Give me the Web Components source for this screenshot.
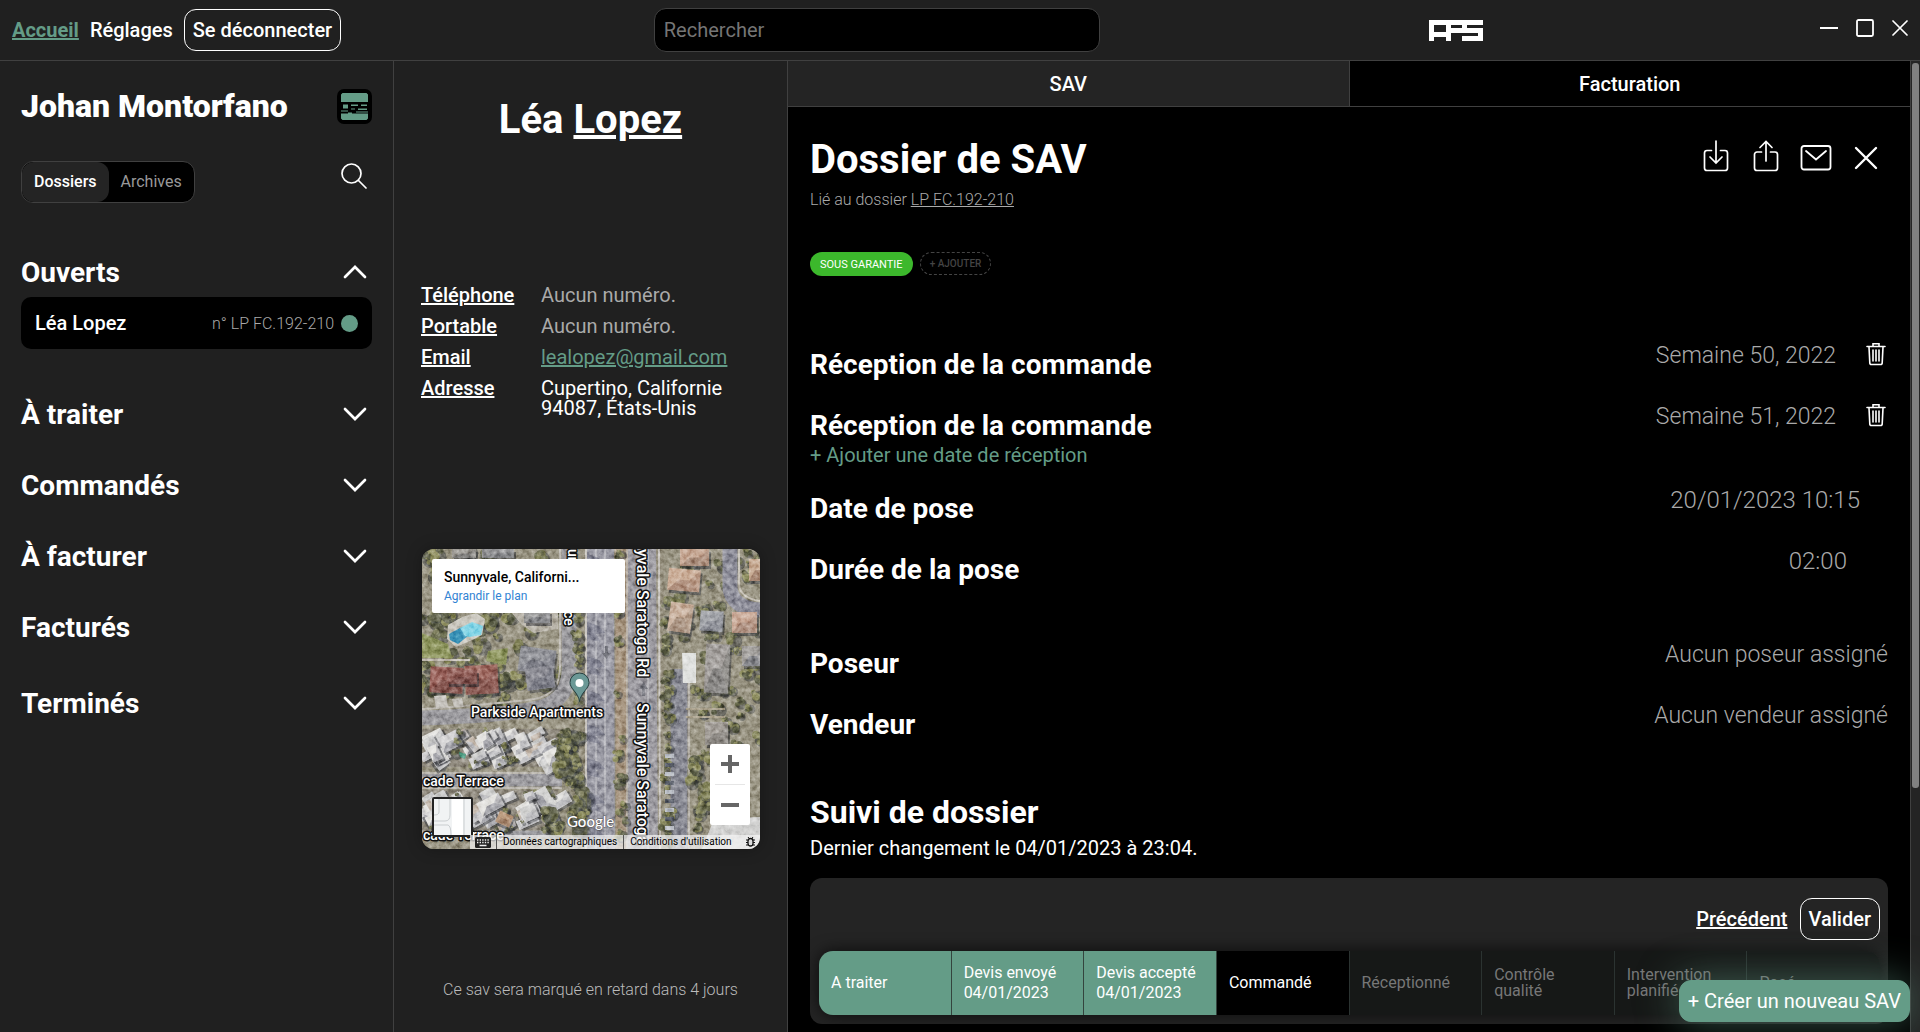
<!DOCTYPE html>
<html lang="fr">
<head>
<meta charset="utf-8">
<title>APS</title>
<style>
    :root {
        --accent: #649c87;
        --panel: #202020;
        --raised: #242424;
        --line: #404040;
        --muted: #999;
    }

    body {
        margin: 0;
        height: 100vh;
        overflow: hidden;
        background: #000;
        color: #fff;
        font: 500 20px/23px Roboto, sans-serif;
    }
</style>
</head>
<body>
<aps-app>
    <aps-topbar slot="top"></aps-topbar>
    <aps-sidebar user="Johan Montorfano">
        <aps-group open>Ouverts
            <aps-card slot="items" ref="n° LP FC.192-210">Léa Lopez</aps-card>
        </aps-group>
        <aps-group>À traiter</aps-group>
        <aps-group>Commandés</aps-group>
        <aps-group>À facturer</aps-group>
        <aps-group>Facturés</aps-group>
        <aps-group class="last">Terminés</aps-group>
    </aps-sidebar>
    <aps-client>
        <aps-map></aps-map>
    </aps-client>
    <aps-dossier></aps-dossier>
    <aps-scrollbar></aps-scrollbar>
</aps-app>

<script>
const icons = {
  search: [26, 26, `<circle cx="10.5" cy="10.5" r="9.5"/><path d="M17.5 17.5 25 25"/>`, 1.7],
  chevron: [24, 14, `<path d="M2 2 12 12 22 2"/>`, 2.7],
  minus: [18, 18, `<path d="M0 9H18"/>`, 2],
  square: [18, 18, `<rect x="1" y="1" width="16" height="16" rx="1.5"/>`, 1.8],
  cross: [16, 16, `<path d="M1 1 15 15M15 1 1 15"/>`, 1.7],
  close: [24, 24, `<path d="M2 2 22 22M22 2 2 22"/>`, 2.4],
  download: [26, 32, `<path d="M8.5 10.5H4A2.5 2.5 0 0 0 1.5 13v15A2.5 2.5 0 0 0 4 30.5h18a2.5 2.5 0 0 0 2.5-2.5V13A2.5 2.5 0 0 0 22 10.5h-4.5M13 1V23M7 17l6 6 6-6"/>`, 1.7],
  share: [26, 32, `<path d="M8.5 12H4a2.5 2.5 0 0 0-2.5 2.5V28A2.5 2.5 0 0 0 4 30.5h18a2.5 2.5 0 0 0 2.5-2.5V14.5A2.5 2.5 0 0 0 22 12h-4.5M13 21V1.5M7 7.5l6-6 6 6"/>`, 1.7],
  mail: [32, 26, `<rect x="1.5" y="1" width="29" height="23.5" rx="2.5"/><path d="M6 6 16 14.5 26 6"/>`, 1.8],
  trash: [20, 24, `<path d="M1 4.5H19M7 4V1.8H13V4M3 5l.8 16A1.5 1.5 0 0 0 5.3 22.5h9.4a1.5 1.5 0 0 0 1.5-1.5L17 5M7 8v11M10 8v11M13 8v11"/>`, 1.6],
};

class ApsIcon extends HTMLElement {
  constructor() {
    super();
    this.attachShadow({ mode: "open" });
  }

  connectedCallback() {
    const [w, h, shape, stroke] = icons[this.getAttribute("name")];
    this.shadowRoot.innerHTML = `
<style>
    :host { display: inline-flex; }
    svg { display: block; fill: none; stroke: currentColor; stroke-linecap: round; }
</style>
<svg width="${w}" height="${h}" viewBox="0 0 ${w} ${h}" stroke-width="${stroke}" aria-hidden="true">${shape}</svg>`;
  }
}
customElements.define("aps-icon", ApsIcon);

// small helper: element whose markup does not depend on anything
function define(name, html) {
  const template = document.createElement("template");
  template.innerHTML = html;
  customElements.define(name, class extends HTMLElement {
    constructor() {
      super();
      const shadow = this.attachShadow({ mode: "open" });
      shadow.append(template.content.cloneNode(true));
      for (const el of shadow.querySelectorAll("[data-attr]")) {
        el.textContent = this.getAttribute(el.dataset.attr);
      }
    }
  });
}

define("aps-button", `
<style>
    :host { display: inline-block; }
    button {
        box-sizing: border-box;
        height: 42px;
        padding: 0 8px;
        border: 1px solid #fff;
        border-radius: 12px;
        background: transparent;
        color: inherit;
        font: inherit;
        white-space: nowrap;
    }
    :host([primary]) button {
        border-color: var(--accent);
        background: var(--accent);
        box-shadow: 0 0 40px rgba(100, 156, 135, .55);
    }
</style>
<button type="button"><slot></slot></button>
`);

define("aps-topbar", `
<style>
    :host {
        display: grid;
        grid-template-columns: calc(34% + 1px) 446px 1fr auto;
        align-items: center;
        height: 60px;
        background: var(--panel);
        border-bottom: 1px solid var(--line);
    }
    nav { display: flex; align-items: center; gap: 11px; padding-left: 12px; }
    a { color: inherit; text-decoration: none; }
    a.current { color: var(--accent); font-weight: 700; text-decoration: underline; }
    input {
        box-sizing: border-box;
        width: 100%;
        height: 44px;
        padding: 0 9px;
        border: 1px solid var(--line);
        border-radius: 12px;
        background: #000;
        color: #fff;
        font: 400 20px/23px Roboto, sans-serif;
    }
    input::placeholder { color: #757575; }
    .logo { justify-self: center; fill: #fff; }
    .window { display: flex; align-items: center; gap: 18px; padding: 0 12px 4px 7px; }
    .window button { display: flex; padding: 0; border: 0; background: none; color: #fff; }
</style>
<nav>
    <a class="current" href="#accueil">Accueil</a>
    <a href="#reglages">Réglages</a>
    <aps-button>Se déconnecter</aps-button>
</nav>
<input type="search" placeholder="Rechercher" aria-label="Rechercher">
<svg class="logo" width="54" height="21" viewBox="0 0 54 21" role="img">
    <path fill-rule="evenodd" d="M0 0H54V5H38V8H54V21H33V16H49V13H22V21H17V17H5V21H0ZM5 5V12H17V5ZM22 5V8H33V5Z"/>
</svg>
<div class="window">
    <button type="button" aria-label="Réduire"><aps-icon name="minus"></aps-icon></button>
    <button type="button" aria-label="Agrandir"><aps-icon name="square"></aps-icon></button>
    <button type="button" aria-label="Fermer"><aps-icon name="cross"></aps-icon></button>
</div>
`);

define("aps-card", `
<style>
    :host {
        display: flex;
        align-items: center;
        gap: 7px;
        height: 52px;
        margin-top: 8px;
        padding: 0 14px;
        border-radius: 10px;
        background: #000;
        font: 500 20px/23px Roboto, sans-serif;
    }
    .name { flex: 1; }
    .ref { color: #aaa; font-size: 16px; font-weight: 300; }
    i { width: 17px; height: 17px; border-radius: 50%; background: var(--accent); }
</style>
<span class="name"><slot></slot></span>
<span class="ref" data-attr="ref"></span>
<i></i>
`);

define("aps-group", `
<style>
    :host { display: block; margin-bottom: 38px; }
    :host([open]) { margin-bottom: 49px; }
    button {
        display: flex;
        justify-content: space-between;
        align-items: center;
        width: 100%;
        padding: 0 5px 0 0;
        border: 0;
        background: none;
        color: inherit;
        font: 700 28px/33px Roboto, sans-serif;
    }
    aps-icon { margin-bottom: 2px; }
    :host([open]) aps-icon { transform: scaleY(-1); }
</style>
<button type="button"><span><slot></slot></span><aps-icon name="chevron"></aps-icon></button>
<slot name="items"></slot>
`);

define("aps-sidebar", `
<style>
    :host {
        display: block;
        box-sizing: border-box;
        padding: 26px 21px;
        background: var(--panel);
        border-right: 1px solid var(--line);
    }
    header, .tools { display: flex; justify-content: space-between; }
    header { align-items: center; margin-bottom: 36px; }
    h1 { margin: 0; font: 900 32px/38px Roboto, sans-serif; }
    .tools { margin-bottom: 53px; }
    .tabs {
        display: flex;
        box-sizing: border-box;
        height: 42px;
        border: 1px solid var(--line);
        border-radius: 12px;
        background: #000;
        overflow: hidden;
    }
    .tabs button {
        padding: 0 12px;
        border: 0;
        background: none;
        color: var(--muted);
        font: 400 16px/20px Roboto, sans-serif;
    }
    .tabs .on { border-radius: 12px; background: var(--raised); color: #fff; font-weight: 500; }
    .find { align-self: flex-start; margin-top: 2px; padding: 0 5px 0 0; border: 0; background: none; color: #fff; }
    ::slotted(.last) { padding-top: 5px; }
</style>
<header>
    <h1 data-attr="user"></h1>
    <svg width="35" height="35" viewBox="0 0 35 35" aria-hidden="true">
        <rect width="35" height="35" rx="7" fill="#000"/>
        <path fill="#649c87" d="M5.5 4h24l1.5 1.5V13H4V5.5ZM4 24.5H11v-1h4v1H31v5L29.5 31h-24L4 29.5Z"/>
        <path fill="#649c87" d="M6 15.5h5v4H6ZM14 15.5h7v1.5h-7ZM24 15.5h6v1.5h-6ZM14 19.5h4v1h-4ZM21 19.5h9v1.5h-9ZM4 21.5h7v1H4ZM19 22.5h12v1H19Z"/>
    </svg>
</header>
<div class="tools">
    <div class="tabs">
        <button type="button" class="on">Dossiers</button>
        <button type="button">Archives</button>
    </div>
    <button type="button" class="find" aria-label="Chercher"><aps-icon name="search"></aps-icon></button>
</div>
<slot></slot>
`);

define("aps-client", `
<style>
    :host {
        display: flex;
        flex-direction: column;
        justify-content: space-between;
        box-sizing: border-box;
        padding: 35px 27px 32px;
        background: var(--panel);
        border-right: 1px solid var(--line);
    }
    h1 { margin: 0 0 10px; font: 700 40px/48px Roboto, sans-serif; text-align: center; }
    u, dt { text-decoration: underline; }
    dl {
        display: grid;
        grid-template-columns: 120px 1fr;
        row-gap: 11px;
        margin: 0;
        line-height: 20px;
    }
    dd { margin: 0; font-weight: 400; }
    .none { color: #aaa; }
    a { color: var(--accent); }
    p { margin: 0; color: #bbb; font: 300 16px/20px Roboto, sans-serif; text-align: center; }
</style>
<h1>Léa <u>Lopez</u></h1>
<dl>
    <dt>Téléphone</dt><dd class="none">Aucun numéro.</dd>
    <dt>Portable</dt><dd class="none">Aucun numéro.</dd>
    <dt>Email</dt><dd><a href="mailto:lealopez@gmail.com">lealopez@gmail.com</a></dd>
    <dt>Adresse</dt><dd>Cupertino, Californie<br>94087, États-Unis</dd>
</dl>
<slot></slot>
<p>Ce sav sera marqué en retard dans 4 jours</p>
`);

class ApsMap extends HTMLElement {
  constructor() {
    super();
    const shadow = this.attachShadow({ mode: "open" });
    shadow.innerHTML = `
<style>
    :host {
        display: block;
        position: relative;
        height: 300px;
        margin-left: 1px;
        border-radius: 12px;
        overflow: hidden;
        background: #8d8976;
        box-shadow: 0 0 16px rgba(0, 0, 0, .3);
    }
    .aerial { display: block; width: 100%; height: 100%; }
    .street {
        fill: #fff;
        stroke: #111;
        stroke-width: 3px;
        paint-order: stroke;
        stroke-linejoin: round;
        font: 500 14px Roboto, sans-serif;
    }
    .road { font-size: 16px; }
    .info {
        position: absolute;
        top: 10px;
        left: 10px;
        box-sizing: border-box;
        width: 193px;
        height: 54px;
        padding: 9px 12px;
        border-radius: 2px;
        background: #fff;
        color: #000;
        font: 500 14px/18px Roboto, sans-serif;
    }
    .info a { display: block; color: #3183d3; font: 400 12px/20px Roboto, sans-serif; text-decoration: none; }
    .zoom {
        position: absolute;
        right: 10px;
        bottom: 24px;
        width: 40px;
        border-radius: 2px;
        background: #fff;
    }
    .zoom button { display: flex; width: 40px; height: 40px; padding: 11px; border: 0; background: none; }
    .zoom hr { margin: 0 5px; border: 0; border-top: 1px solid #e6e6e6; }
    .plan {
        position: absolute;
        left: 10px;
        bottom: 12px;
        padding: 0;
        border: 2px solid #222;
        border-radius: 2px;
        background: #f1f3f4;
    }
    .plan svg, .zoom svg { display: block; }
    .legal {
        position: absolute;
        right: 0;
        bottom: 0;
        display: flex;
        align-items: center;
        height: 14px;
        left: 48px;
        background: rgba(245, 245, 245, .7);
        color: #000;
        font: 400 10px/14px Roboto, sans-serif;
        white-space: nowrap;
    }
    .legal a { padding: 0 6px; border-left: 1px solid #555; color: inherit; text-decoration: none; }
    .legal .kbd { margin: 0 5px; }
    .legal .bug { margin-left: 8px; }
</style>
<svg class="aerial" viewBox="0 0 338 300" preserveAspectRatio="xMidYMid slice" role="img">
    <filter id="grain" x="0" y="0" width="100%" height="100%" color-interpolation-filters="sRGB">
        <feTurbulence type="fractalNoise" baseFrequency=".2" numOctaves="3" seed="7"/>
        <feColorMatrix values="1.1 0 0 0 0  1.1 0 0 0 0  1.1 0 0 0 0  0 0 0 0 1"/>
        <feComposite in2="SourceGraphic" operator="in"/>
        <feBlend in2="SourceGraphic" mode="soft-light"/>
    </filter>
    <g filter="url(#grain)">
        <rect width="338" height="300" fill="#96917f"/>
        <g id="ground"></g>
    </g>
    <g class="street">
        <text x="49" y="168">Parkside Apartments</text>
        <text x="1" y="237">cade Terrace</text>
        <text x="1" y="291">cade Terrace</text>
        <text class="road" transform="translate(215 0) rotate(90)">yvale Saratoga Rd</text>
        <text class="road" transform="translate(215 154) rotate(90)">Sunnyvale Saratoga</text>
        <text transform="translate(146 0) rotate(90)">ur</text>
        <text transform="translate(142 62) rotate(90)">ce</text>
    </g>
    <path d="M157.5 152.5C156 143 148 140 148 133.5a9.500 9.500 0 0 1 19 0C167 140 159 143 157.5 152.5Z" fill="#6b9896" stroke="#263f40"/>
    <circle cx="157.5" cy="134" r="4" fill="#fff"/>
    <text x="145" y="278" fill="#fff" stroke="#555" stroke-width="1" paint-order="stroke" font-family="Lato, sans-serif" font-size="15">Google</text>
</svg>
<div class="info">Sunnyvale, Californi...<a href="#plan">Agrandir le plan</a></div>
<button type="button" class="plan" aria-label="Plan">
    <svg width="37" height="36" viewBox="0 0 37 36">
        <path d="M18 0H29V36H18Z" fill="#fff"/>
        <path d="M0 22H11Q16 22 16 16V0M0 26H14Q17 27 17 36M5 0V13Q5 16 0 16M30 0V36" fill="none" stroke="#c9cdcf"/>
    </svg>
</button>
<div class="zoom">
    <button type="button" aria-label="Zoom avant"><svg width="18" height="18"><path d="M0 9H18M9 0V18" stroke="#666" stroke-width="4"/></svg></button>
    <hr>
    <button type="button" aria-label="Zoom arrière"><svg width="18" height="18"><path d="M0 9H18" stroke="#666" stroke-width="4"/></svg></button>
</div>
<div class="legal">
    <svg class="kbd" width="16" height="11" viewBox="0 0 16 11"><rect width="16" height="11" rx="1.5" fill="#222"/><path d="M2 3H14M2 5.5H14" stroke="#eee" stroke-width="1.3" stroke-dasharray="1.4 1.2"/><path d="M4.5 8.5H11.5" stroke="#eee" stroke-width="1.3"/></svg>
    <a href="#donnees">Données cartographiques</a>
    <a href="#conditions">Conditions d'utilisation</a>
    <svg class="bug" width="9" height="10" viewBox="0 0 9 10"><path d="M0 3H9M0 5.5H9M0 8H9M2 0 3.5 2M7 0 5.5 2" stroke="#111"/><rect x="2" y="1.5" width="5" height="7.5" rx="2.5" fill="#ddd" stroke="#111" stroke-width="1.3"/></svg>
</div>`;
    this.ground = shadow.querySelector("#ground");
    this.ground.innerHTML = this.drawGround();
  }

  drawGround() {
    let seed = 11;
    const rnd = () => (seed = (seed * 16807) % 2147483647) / 2147483647;
    const out = [];
    const poly = (fill, points) => out.push(`<polygon fill="${fill}" points="${points}"/>`);
    const path = (stroke, width, d) => out.push(`<path fill="none" stroke="${stroke}" stroke-width="${width}" d="${d}"/>`);
    // a crown is a handful of small blobs, so that it has no clean edge
    const trees = (n, x, y, w, h, r = 6) => {
      const greens = ["#5d5f48", "#686a4c", "#7b7c52", "#53563f", "#8b8b5c"];
      for (let i = 0; i < n; i++) {
        const cx = x + rnd() * w, cy = y + rnd() * h, size = r * (.5 + rnd() * .7);
        out.push(`<circle cx="${cx + 2}" cy="${cy + 2}" r="${size}" fill="#34373a" opacity=".5"/>`);
        for (let j = 0; j < 7; j++) {
          const bx = cx + (rnd() - .5) * size * 1.4, by = cy + (rnd() - .5) * size * 1.4;
          out.push(`<circle cx="${bx}" cy="${by}" r="${size * (.25 + rnd() * .35)}" fill="${greens[(i + j % 2) % 5]}"/>`);
        }
        out.push(`<circle cx="${cx - size / 3}" cy="${cy - size / 3}" r="${size / 3}" fill="#a3a177" opacity=".5"/>`);
      }
    };
    // hipped roof, lit from the top left
    const roof = (x, y, w, h, light, dark, angle = 0) => out.push(
      `<g transform="rotate(${angle} ${x + w / 2} ${y + h / 2})"><rect x="${x + 2}" y="${y + 3}" width="${w}" height="${h}" fill="#33353a" opacity=".55"/>` +
      `<rect x="${x}" y="${y}" width="${w}" height="${h}" fill="${light}"/>` +
      `<path d="M${x} ${y + h}l${w / 3} ${-h / 2}h${w / 3}l${w / 3} ${h / 2}z" fill="${dark}"/>` +
      `<path d="M${x + w} ${y}v${h}l${-w / 3} ${-h / 2}z" fill="${dark}" opacity=".6"/></g>`);

    trees(75, 0, 0, 135, 155, 8);
    trees(90, 240, 0, 98, 300, 6);
    poly("#8a925a", "0,84 26,95 30,109 0,109");
    poly("#8a925a", "66,102 86,99 84,116 64,112");
    poly("#b5b0a5", "88,62 136,62 136,80 112,84 100,76");
    path("#c2bcb2", 2, "M0 111H48");

    // side streets
    path("#97969a", 15, "M147 0V120Q147 150 120 158T0 169");
    path("#b9b5ad", 2, "M138 0V118Q138 146 112 150T0 160");
    path("#98979b", 13, "M0 231H140");
    path("#b9b5ad", 2, "M0 224H140M0 239H140");
    path("#97979b", 7, "M0 285H140");
    path("#858690", 17, "M257 120V300");
    path("#b6b1a8", 2, "M267 120V300");
    path("#8b8b97", 15, "M308 0V38Q309 59 338 61");
    path("#c4bfb4", 2, "M317 0V35Q318 49 338 52");

    // Saratoga road, both ways
    poly("#918b79", "156,0 242,0 242,300 160,300");
    poly("#9696a0", "165,0 192,0 193,300 163,300");
    poly("#9a989e", "206,0 234,0 236,300 206,300");
    poly("#a3917b", "193,0 206,0 205,300 194,300");
    path("#c7c3bd", 2, "M164 0V300M237 0 238 300");
    path("#c9c9cc", 1, "M174 0V300M183 0V300M226 0V300M205 0V300");
    trees(18, 195, 0, 8, 300, 5);
    trees(20, 155, 48, 4, 245, 6);
    trees(14, 152, 230, 14, 60, 8);
    trees(24, 242, 50, 7, 245, 6);
    for (let i = 0; i < 9; i++) {
      const y = 5 + i * 34;
      out.push(`<path d="M165 ${y}l12 4 6 7-9 1 5 8-14-3z" fill="#5a5d72" opacity=".45"/>`);
    }
    // lane arrows
    out.push(`<path d="M183 97v7h-3l4.5 6 4.5-6h-3v-7zM220 147v-7h-3l4.5-7 4.5 7h-3v7z" fill="#6f7078"/>`);

    // swimming pool
    poly("#c9c6bd", "26,76 40,68 54,64 63,70 60,86 48,92 34,98 25,90");
    poly("#348eb4", "27,85 38,79 48,78 46,87 36,95 28,91");
    poly("#80d3e5", "38,79 50,73 61,77 59,86 48,88 43,87");

    roof(8, 118, 33, 26, "#965f58", "#80504a", 3);
    roof(43, 116, 33, 29, "#9b655c", "#85554e", -3);
    roof(25, 121, 30, 14, "#8d5a54", "#794b47");
    roof(97, 99, 36, 25, "#8f9096", "#787982", 8);
    roof(104, 118, 28, 22, "#8b8b93", "#757680", -8);
    roof(102, 62, 26, 12, "#979797", "#7e7f83");
    roof(30, 0, 24, 9, "#96938d", "#7e7d7b");
    roof(60, 0, 32, 9, "#939395", "#7c7d80");
    poly("#c3c0ba", "12,147 24,146 26,158 14,160");
    poly("#c3c0ba", "30,150 40,149 42,158 32,158");

    // white roofs south of the apartments, laid in loose clusters
    const blocks = [[0, 180, 150, 38], [0, 241, 136, 40]];
    const whites = ["#dcdbd9", "#cfcfce", "#e3e2df", "#c4b8ac", "#d3d2d3"];
    for (const [x, y, w, h] of blocks) {
      poly("#8d877b", `${x},${y} ${x + w},${y} ${x + w},${y + h} ${x},${y + h}`);
      trees(16, x, y, w, h, 4);
      for (const cx of [14, 62, 112]) {
        for (let i = 0; i < 13; i++) {
          const rw = 10 + rnd() * 15, rh = 8 + rnd() * 8;
          const rx = x + cx - 22 + rnd() * 36, ry = y + rnd() * (h - 12);
          roof(rx, ry, rw, rh, whites[i % 5], i % 3 ? "#bcbcbf" : "#a2a2a8", rnd() > .3 ? -32 + rnd() * 10 : 50 + rnd() * 14);
        }
        trees(3, x + cx + 18, y, 8, h, 4);
      }
      trees(8, x, y + h - 10, w, 10, 3);
    }
    poly("#3f8f74", "37,203 44,205 43,210 38,208");
    roof(75, 264, 15, 12, "#b8977a", "#9c7b62", 24);
    trees(14, 140, 184, 12, 20, 7);
    trees(14, 138, 210, 20, 22, 8);
    trees(8, 122, 263, 20, 22, 8);

    // houses on the east side
    roof(258, 0, 29, 17, "#c4a591", "#a38674");
    roof(246, 20, 32, 22, "#c9ab95", "#ac8b78", 5);
    roof(247, 54, 23, 29, "#c9b19e", "#a58e7c", 8);
    roof(278, 62, 23, 20, "#a3a5aa", "#888a92", 4);
    roof(310, 63, 25, 21, "#c8a896", "#a98a7a");
    roof(327, 10, 18, 22, "#c4a78f", "#a48470");
    roof(283, 95, 24, 49, "#a19d9a", "#858381", 3);
    roof(320, 97, 22, 20, "#a09d9a", "#808186");
    roof(283, 173, 23, 23, "#a19c96", "#87837e");
    poly("#dedfdd", "260,104 274,104 274,134 261,134");
    path("#a89f8a", 2, "M264 160H303M264 168H303");
    for (let y = 205; y < 285; y += 9) {
      poly(y % 2 ? "#b9bdc4" : "#565b66", `243,${y} 252,${y} 252,${y + 4} 243,${y + 4}`);
    }
    poly("#cfcfce", "292,270 338,268 338,300 280,300");
    trees(14, 268, 192, 22, 80, 7);
    return out.join("");
  }
}
customElements.define("aps-map", ApsMap);

define("aps-field", `
<style>
    :host { display: flex; justify-content: space-between; align-items: flex-start; margin-bottom: 22px; }
    h2 { margin: 0; padding-top: 6px; font: 700 28px/33px Roboto, sans-serif; }
    .value { display: flex; color: #aaa; font: 300 23px/28px Roboto, sans-serif; }
    ::slotted(span) { font-size: 24px; }
</style>
<h2 data-attr="label"></h2>
<div class="value"><slot></slot></div>
`);

define("aps-step", `
<style>
    :host {
        display: flex;
        flex-direction: column;
        justify-content: center;
        min-width: 0;
        padding-left: 12px;
        border-right: 1px solid #2b3331;
        background: #161817;
        color: #777;
        font: 400 16px/20px Roboto, sans-serif;
    }
    :host([wrap]) { line-height: 16px; padding-right: 24px; }
    :host([done]) { background: var(--accent); border-color: #34443e; color: #fff; }
    :host([current]) { background: #000; border-color: #2b3331; color: #fff; }
    :host(:last-child) { border: 0; }
</style>
<div><slot></slot></div>
`);

define("aps-dossier", `
<style>
    :host { display: flex; flex-direction: column; min-width: 0; background: #000; position: relative; }
    .tabs { display: flex; flex: none; height: 45px; border-bottom: 1px solid var(--line); }
    .tabs button { flex: 1 1 0; padding: 2px 0 0; border: 0; background: none; color: #fff; font: inherit; }
    .tabs .on { border-right: 1px solid var(--line); background: var(--raised); }
    main { padding: 29px 22px 0; }
    header { display: flex; justify-content: space-between; align-items: flex-start; }
    h1 { margin: 0 0 7px; font: 700 40px/47px Roboto, sans-serif; }
    small { display: block; color: #aaa; font: 300 16px/20px Roboto, sans-serif; }
    small a { color: inherit; }
    .actions { display: flex; align-items: center; gap: 24px; padding: 4px 10px 0 0; }
    button { cursor: pointer; }
    .icon { display: flex; padding: 0; border: 0; background: none; color: #fff; }
    .icon.mail, .icon.close { padding-top: 4px; }
    .icon.mail { margin: 0 -2px 0 -3px; }
    .tags { display: flex; gap: 7px; margin: 42px 0 66px; }
    .tag {
        box-sizing: border-box;
        height: 24px;
        padding: 0 10px;
        border: 0;
        border-radius: 12px;
        background: #3cb82c;
        color: #fff;
        font: 400 11px/25px Roboto, sans-serif;
    }
    .add { height: 23px; padding: 0 9px; border: 1px dashed #444; background: none; color: #444; font-size: 10px; line-height: 21px; font-weight: 500; }
    .link { margin-top: -20px; margin-bottom: 19px; padding: 0; border: 0; background: none; color: var(--accent); font: 400 20px/23px Roboto, sans-serif; display: block; }
    .value-trash { margin-left: 30px; padding-right: 2px; }
    .date { margin-right: 28px; }
    .time { margin-right: 41px; }
    .spaced { margin-top: 55px; }
    .follow { margin: 52px 0 6px; font: 700 32px/38px Roboto, sans-serif; }
    p { margin: 0 0 18px; font-weight: 400; }
    .panel { padding: 20px 8px 9px 9px; border-radius: 12px; background: var(--raised); }
    .buttons { display: flex; justify-content: flex-end; align-items: center; gap: 12px; margin-bottom: 11px; }
    .buttons a { color: inherit; }
    .steps {
        display: grid;
        grid-auto-flow: column;
        grid-auto-columns: minmax(0, 1fr);
        height: 64px;
        border-radius: 14px;
        overflow: hidden;
        box-shadow: 0 0 16px rgba(0, 0, 0, .7);
    }
    .create { position: absolute; right: 0; bottom: 10px; font-weight: 400; }
</style>
<div class="tabs">
    <button type="button" class="on">SAV</button>
    <button type="button">Facturation</button>
</div>
<main>
    <header>
        <div>
            <h1>Dossier de SAV</h1>
            <small>Lié au dossier <a href="#dossier">LP FC.192-210</a></small>
        </div>
        <div class="actions">
            <button type="button" class="icon" aria-label="Télécharger"><aps-icon name="download"></aps-icon></button>
            <button type="button" class="icon" aria-label="Partager"><aps-icon name="share"></aps-icon></button>
            <button type="button" class="icon mail" aria-label="Envoyer"><aps-icon name="mail"></aps-icon></button>
            <button type="button" class="icon close" aria-label="Fermer"><aps-icon name="close"></aps-icon></button>
        </div>
    </header>
    <div class="tags">
        <span class="tag">SOUS GARANTIE</span>
        <button type="button" class="tag add">+ AJOUTER</button>
    </div>
    <aps-field label="Réception de la commande">Semaine 50, 2022
        <button type="button" class="icon value-trash" aria-label="Supprimer"><aps-icon name="trash"></aps-icon></button>
    </aps-field>
    <aps-field label="Réception de la commande">Semaine 51, 2022
        <button type="button" class="icon value-trash" aria-label="Supprimer"><aps-icon name="trash"></aps-icon></button>
    </aps-field>
    <button type="button" class="link">+ Ajouter une date de réception</button>
    <aps-field label="Date de pose"><span class="date">20/01/2023 10:15</span></aps-field>
    <aps-field label="Durée de la pose"><span class="time">02:00</span></aps-field>
    <aps-field class="spaced" label="Poseur">Aucun poseur assigné</aps-field>
    <aps-field label="Vendeur">Aucun vendeur assigné</aps-field>
    <h2 class="follow">Suivi de dossier</h2>
    <p>Dernier changement le 04/01/2023 à 23:04.</p>
    <div class="panel">
        <div class="buttons">
            <a href="#precedent">Précédent</a>
            <aps-button>Valider</aps-button>
        </div>
        <div class="steps">
            <aps-step done>A traiter</aps-step>
            <aps-step done>Devis envoyé<br>04/01/2023</aps-step>
            <aps-step done>Devis accepté<br>04/01/2023</aps-step>
            <aps-step current>Commandé</aps-step>
            <aps-step>Réceptionné</aps-step>
            <aps-step wrap>Contrôle qualité</aps-step>
            <aps-step wrap>Intervention planifiée</aps-step>
            <aps-step>Posé</aps-step>
        </div>
    </div>
</main>
<aps-button class="create" primary>+ Créer un nouveau SAV</aps-button>
`);

define("aps-scrollbar", `
<style>
    :host { display: block; box-sizing: border-box; padding: 2px 1px; border-left: 1px solid var(--line); background: var(--raised); }
    div { height: 75%; border-radius: 3px; background: #808080; }
</style>
<div></div>
`);

define("aps-app", `
<style>
    :host { display: flex; flex-direction: column; height: 100%; }
    .columns { flex: 1; display: grid; grid-template-columns: 394px 394px minmax(0, 1fr) 10px; min-height: 0; }
</style>
<slot name="top"></slot>
<div class="columns"><slot></slot></div>
`);
</script>
</body>
</html>
